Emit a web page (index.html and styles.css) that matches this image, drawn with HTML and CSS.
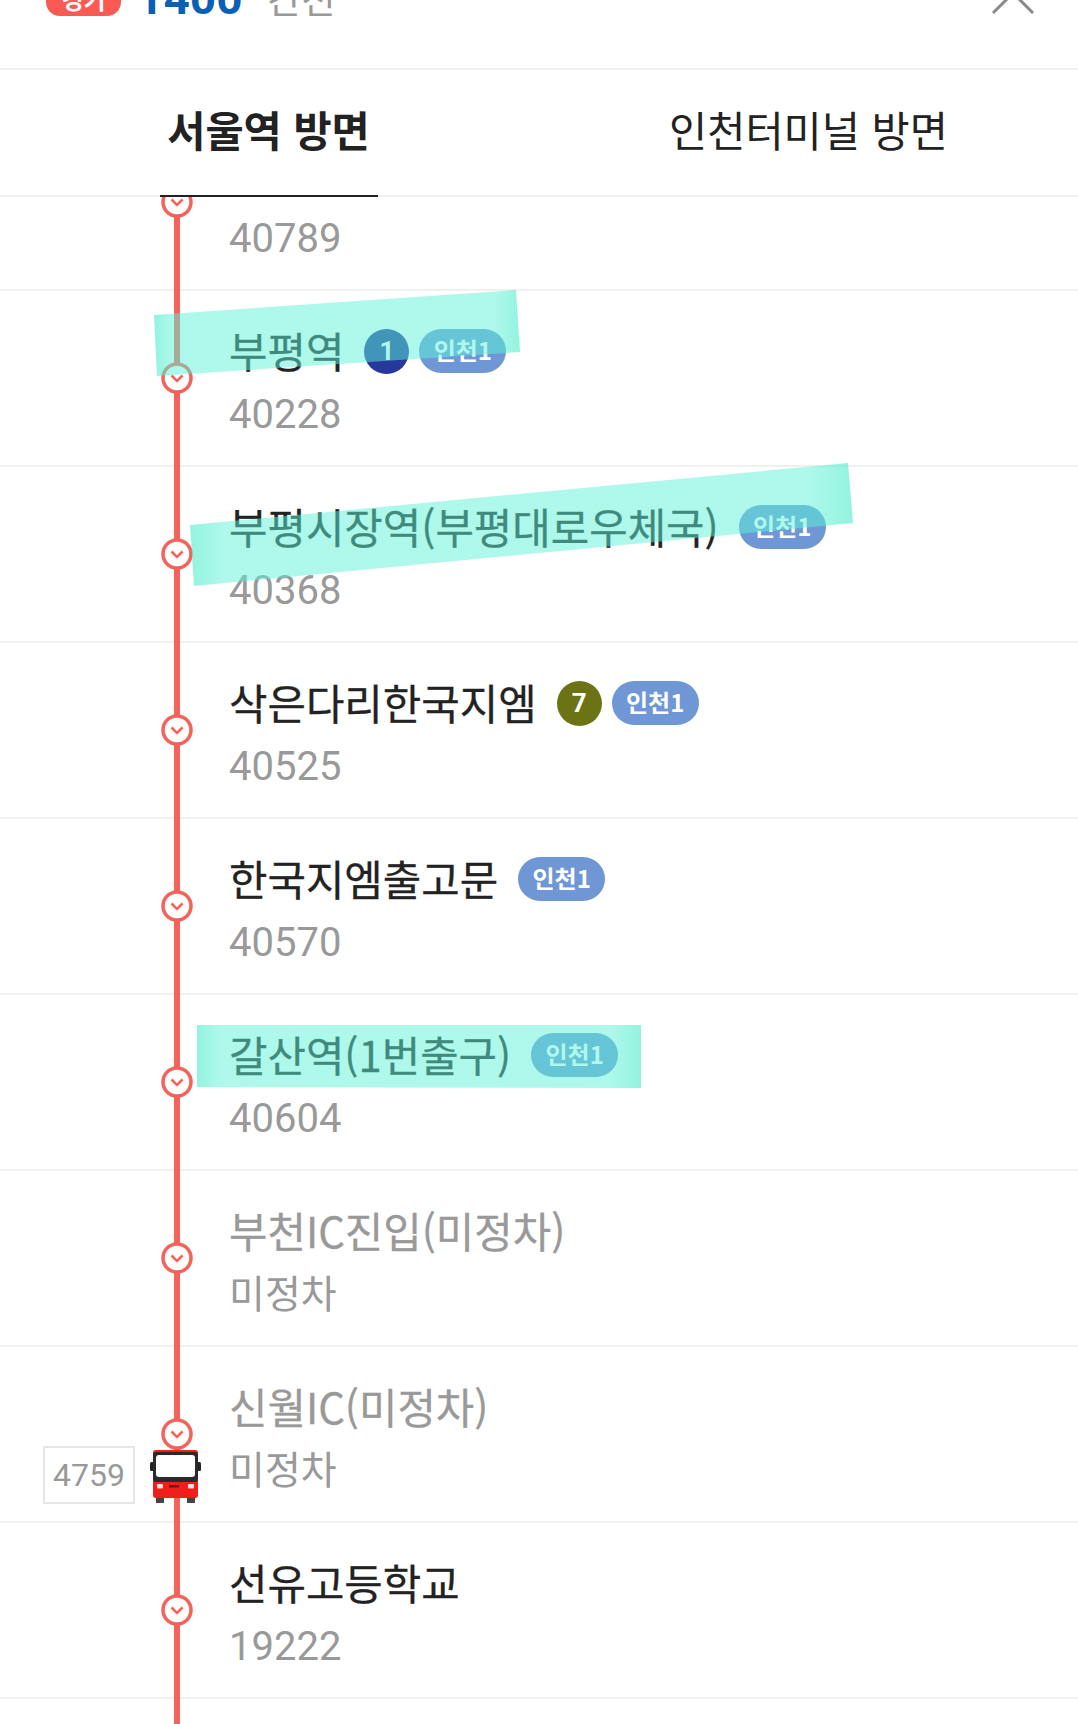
FILE: index.html
```html
<!DOCTYPE html>
<html lang="ko">
<head>
<meta charset="utf-8">
<title>1400 간선</title>
<link rel="stylesheet" href="styles.css">
</head>
<body>
<div class="page">
  <header class="top">
    <div class="top-left">
      <span class="pill">경기</span>
      <span class="route-no">1400</span>
      <span class="route-type">간선</span>
    </div>
    <svg class="close" viewBox="0 0 44 44" width="44" height="44"><path d="M2 42 L22 22 L42 42" fill="none" stroke="#8a8a8a" stroke-width="3"/></svg>
  </header>
  <nav class="tabs">
    <div class="tab"><span class="tab-label active">서울역 방면</span></div>
    <div class="tab"><span class="tab-label">인천터미널 방면</span></div>
  </nav>
  <main class="list">
    <div class="list-inner">
      <section class="row">
        <div class="rail"><svg class="node" viewBox="0 0 32 32"><circle cx="16" cy="16" r="14" /><path d="M10.5 13.5 L16 19 L21.500 13.500"/></svg></div>
        <div class="info"><div class="name"></div><div class="num">40789</div></div>
      </section>
      <section class="row">
        <div class="rail"><svg class="node" viewBox="0 0 32 32"><circle cx="16" cy="16" r="14" /><path d="M10.5 13.5 L16 19 L21.500 13.500"/></svg></div>
        <div class="info"><div class="name">부평역<span class="line line-1">1</span><span class="tag">인천1</span></div><div class="num">40228</div></div>
      </section>
      <section class="row">
        <div class="rail"><svg class="node" viewBox="0 0 32 32"><circle cx="16" cy="16" r="14" /><path d="M10.5 13.5 L16 19 L21.500 13.500"/></svg></div>
        <div class="info"><div class="name">부평시장역(부평대로우체국)<span class="tag tag-first">인천1</span></div><div class="num">40368</div></div>
      </section>
      <section class="row">
        <div class="rail"><svg class="node" viewBox="0 0 32 32"><circle cx="16" cy="16" r="14" /><path d="M10.5 13.5 L16 19 L21.500 13.500"/></svg></div>
        <div class="info"><div class="name">삭은다리한국지엠<span class="line line-7">7</span><span class="tag">인천1</span></div><div class="num">40525</div></div>
      </section>
      <section class="row">
        <div class="rail"><svg class="node" viewBox="0 0 32 32"><circle cx="16" cy="16" r="14" /><path d="M10.5 13.5 L16 19 L21.500 13.500"/></svg></div>
        <div class="info"><div class="name">한국지엠출고문<span class="tag tag-first">인천1</span></div><div class="num">40570</div></div>
      </section>
      <section class="row">
        <div class="rail"><svg class="node" viewBox="0 0 32 32"><circle cx="16" cy="16" r="14" /><path d="M10.5 13.5 L16 19 L21.500 13.500"/></svg></div>
        <div class="info"><div class="name">갈산역(1번출구)<span class="tag tag-first">인천1</span></div><div class="num">40604</div></div>
      </section>
      <section class="row muted">
        <div class="rail"><svg class="node" viewBox="0 0 32 32"><circle cx="16" cy="16" r="14" /><path d="M10.5 13.5 L16 19 L21.500 13.500"/></svg></div>
        <div class="info"><div class="name">부천IC진입(미정차)</div><div class="num">미정차</div></div>
      </section>
      <section class="row muted">
        <div class="rail"><svg class="node" viewBox="0 0 32 32"><circle cx="16" cy="16" r="14" /><path d="M10.5 13.5 L16 19 L21.500 13.500"/></svg></div>
        <div class="info"><div class="name">신월IC(미정차)</div><div class="num">미정차</div></div>
        <div class="bus-no">4759</div>
        <svg class="bus" viewBox="0 0 52 53">
          <rect x="0" y="12" width="4" height="9" rx="1.500" fill="#222"/>
          <rect x="47" y="12" width="4" height="9" rx="1.500" fill="#222"/>
          <rect x="6" y="45" width="8" height="8" fill="#444"/>
          <rect x="37" y="45" width="8" height="8" fill="#444"/>
          <rect x="3" y="0" width="45" height="48" rx="3" fill="#ef1f1a"/>
          <rect x="3" y="2" width="45" height="30" rx="3" fill="#2a2a2a"/>
          <rect x="6" y="5" width="39" height="22" rx="3" fill="#fff"/>
          <rect x="7" y="34" width="6" height="4.500" rx="1" fill="#ffe0dc"/>
          <rect x="38" y="34" width="6" height="4.500" rx="1" fill="#ffe0dc"/>
          <rect x="19" y="35" width="10" height="2.500" fill="#7a0f0c"/>
        </svg>
      </section>
      <section class="row">
        <div class="rail"><svg class="node" viewBox="0 0 32 32"><circle cx="16" cy="16" r="14" /><path d="M10.5 13.5 L16 19 L21.500 13.500"/></svg></div>
        <div class="info"><div class="name">선유고등학교</div><div class="num">19222</div></div>
      </section>
      <section class="row">
        <div class="rail"></div>
      </section>
    </div>
  </main>
  <svg class="marks" viewBox="0 0 1078 1724" width="1078" height="1724">
    <defs>
      <linearGradient id="hl" x1="0" x2="1" y1="0" y2="0">
        <stop offset="0" stop-color="#4fecc9" stop-opacity=".62"/>
        <stop offset=".05" stop-color="#5cf2d6" stop-opacity=".5"/>
        <stop offset=".93" stop-color="#5cf2d6" stop-opacity=".5"/>
        <stop offset="1" stop-color="#4fecc9" stop-opacity=".62"/>
      </linearGradient>
    </defs>
    <polygon fill="url(#hl)" points="154,315 516,290 520,352 157,376"/>
    <polygon fill="url(#hl)" points="190,525 848,463 853,523 194,586"/>
    <polygon fill="url(#hl)" points="197,1025 641,1025 641,1088 197,1087"/>
  </svg>
</div>
</body>
</html>
```
FILE: styles.css
```css
* { box-sizing: border-box; }
html, body { margin: 0; padding: 0; background: #fff; }
body { font-family: "Noto Sans CJK KR", Roboto, sans-serif; }
.page { position: relative; width: 1078px; height: 1724px; overflow: hidden; display: flex; flex-direction: column; }

.top { height: 70px; flex: none; display: flex; justify-content: space-between; align-items: flex-start; padding: 0 43px 0 46px; border-bottom: 2px solid #f0f0f0; overflow: hidden; }
.top-left { display: flex; align-items: center; margin-top: -20px; height: 36px; }
.pill { width: 75px; height: 36px; border-radius: 14px; background: #fa5a54; color: #fff; font-size: 24px; font-weight: 700; display: flex; align-items: center; justify-content: center; }
.route-no { margin-left: 16px; font-family: Roboto, sans-serif; font-size: 46px; font-weight: 700; color: #0b5fb5; line-height: 36px; }
.route-type { margin-left: 25px; font-size: 37px; color: #999; line-height: 36px; }
.close { flex: none; margin-top: -29px; }

.tabs { height: 127px; flex: none; display: grid; grid-template-columns: 1fr 1fr; border-bottom: 2px solid #f0f0f0; position: relative; z-index: 1; }
.tab { display: flex; justify-content: center; margin-bottom: -2px; }
.tab-label { padding: 0 9px 8px; display: flex; align-items: center; font-size: 41.500px; color: #222; border-bottom: 2px solid transparent; }
.tab-label.active { font-weight: 700; border-bottom-color: #222; width: 218px; margin-left: -2px; justify-content: center; white-space: nowrap; }

.list { flex: 1; min-height: 0; overflow: hidden; }
.list-inner { margin-top: -82px; }
.row { position: relative; height: 176px; display: flex; border-bottom: 2px solid #f0f0f0; }
.rail { flex: none; margin-left: 161px; width: 32px; margin-bottom: -2px; padding-bottom: 2px; display: flex; align-items: center; justify-content: center; background: linear-gradient(#f4635b, #f4635b) center / 6px 100% no-repeat; }
.node { width: 32px; height: 32px; display: block; }
.node circle { fill: #fff; stroke: #f4635b; stroke-width: 3.500; }
.node path { fill: none; stroke: #f4635b; stroke-width: 2.500; }
.info { margin-left: 36px; display: flex; flex-direction: column; padding-top: 33px; }
.name { height: 54px; padding-bottom: 3px; display: flex; align-items: center; font-size: 41.800px; color: #222; -webkit-text-stroke: 0.3px currentColor; white-space: nowrap; }
.num { margin-top: 10px; font-family: Roboto, "Noto Sans CJK KR", sans-serif; font-size: 40px; line-height: 54px; color: #999; }
.muted .name, .muted .num { color: #999; }
.muted .num { margin-top: 6px; font-family: "Noto Sans CJK KR", sans-serif; font-size: 39px; }

.line { flex: none; width: 45px; height: 45px; border-radius: 50%; margin: 3px 0 0 20px; display: flex; align-items: center; justify-content: center; color: #fff; -webkit-text-stroke: 0; font-family: Roboto, sans-serif; font-weight: 700; font-size: 26px; }
.line-1 { background: #26389c; }
.line-7 { background: #6b7314; }
.tag { flex: none; width: 87px; height: 44px; border-radius: 22px; margin: 3px 0 0 10px; padding-bottom: 3px; display: flex; align-items: center; justify-content: center; background: #6f97d6; color: #fff; -webkit-text-stroke: 0; font-size: 24px; font-weight: 700; }
.tag-first { margin-left: 20px; }

.bus-no { position: absolute; left: 43px; top: 99px; width: 92px; height: 58px; border: 2px solid #e6e6e6; background: #fff; display: flex; align-items: center; justify-content: center; font-family: Roboto, sans-serif; font-size: 32px; color: #999; }
.bus { position: absolute; left: 150px; top: 103px; width: 52px; height: 53px; }

.marks { position: absolute; left: 0; top: 0; pointer-events: none; }
```
